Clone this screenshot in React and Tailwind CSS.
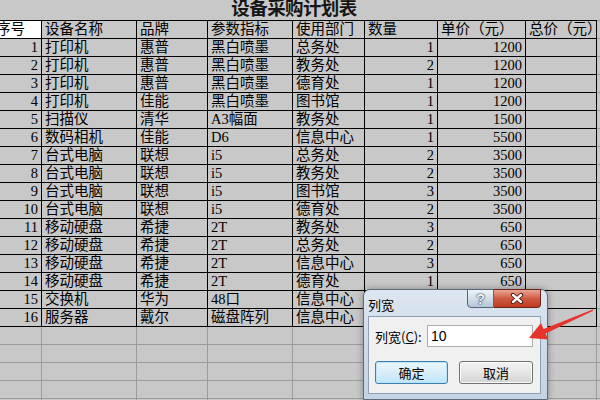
import React from "react";

const W = ["w-[50px]", "w-[95px]", "w-[71px]", "w-[85px]", "w-[72px]", "w-[73px]", "w-[88px]", "w-[71px]", "w-[90px]"];
const RIGHT = [true, false, false, false, false, true, true, true, false];

const header = ["序号", "设备名称", "品牌", "参数指标", "使用部门", "数量", "单价（元）", "总价（元）", ""];

const rows = [
  [1, "打印机", "惠普", "黑白喷墨", "总务处", 1, 1200],
  [2, "打印机", "惠普", "黑白喷墨", "教务处", 2, 1200],
  [3, "打印机", "惠普", "黑白喷墨", "德育处", 1, 1200],
  [4, "打印机", "佳能", "黑白喷墨", "图书馆", 1, 1200],
  [5, "扫描仪", "清华", "A3幅面", "教务处", 1, 1500],
  [6, "数码相机", "佳能", "D6", "信息中心", 1, 5500],
  [7, "台式电脑", "联想", "i5", "总务处", 2, 3500],
  [8, "台式电脑", "联想", "i5", "教务处", 2, 3500],
  [9, "台式电脑", "联想", "i5", "图书馆", 3, 3500],
  [10, "台式电脑", "联想", "i5", "德育处", 2, 3500],
  [11, "移动硬盘", "希捷", "2T", "教务处", 3, 650],
  [12, "移动硬盘", "希捷", "2T", "总务处", 2, 650],
  [13, "移动硬盘", "希捷", "2T", "信息中心", 3, 650],
  [14, "移动硬盘", "希捷", "2T", "德育处", 1, 650],
  [15, "交换机", "华为", "48口", "信息中心", "", ""],
  [16, "服务器", "戴尔", "磁盘阵列", "信息中心", "", ""],
];

function Row({ cells, head }) {
  return (
    <div className="flex">
      {W.map((w, i) => {
        const last = i === W.length - 1;
        const border = last ? "border-[#9c9c9c]" : "border-black";
        return (
          <div
            key={i}
            className={`${w} shrink-0 ${head ? "h-[19px] border-t" : "h-[18px]"} border-b border-r ${border} px-[3px] leading-[17px] whitespace-nowrap overflow-hidden ${RIGHT[i] && !head ? "text-right" : "text-left"} ${head && i === 0 ? "bg-white pl-[4px]" : ""}`}
          >
            {cells[i] ?? ""}
          </div>
        );
      })}
    </div>
  );
}

function EmptyRow() {
  return (
    <div className="flex">
      {W.map((w, i) => (
        <div key={i} className={`${w} shrink-0 h-[18px] border-b border-r border-[#9c9c9c]`} />
      ))}
    </div>
  );
}

export default function App() {
  return (
    <div className="relative w-[600px] h-[400px] overflow-hidden bg-[#c8c8c8] text-black">
      {/* title */}
      <div className="h-[20px] flex justify-center pr-[12px]">
        <div className="leading-[14px] text-[18.5px] font-bold text-[#161616] tracking-[-0.6px] [font-family:'Noto_Sans_CJK_SC',sans-serif]">
          设备采购计划表
        </div>
      </div>

      {/* sheet */}
      <div className="-ml-[8px] text-[14.5px] [font-family:'Liberation_Serif','Noto_Sans_CJK_SC',serif]">
        <Row cells={header} head />
        {rows.map((r, i) => (
          <Row key={i} cells={r} />
        ))}
        <EmptyRow />
        <EmptyRow />
        <EmptyRow />
        <EmptyRow />
        <EmptyRow />
      </div>

      {/* dialog */}
      <div className="absolute left-[363px] top-[289px] w-[185px] h-[111px] rounded-t-[7px] border border-[#5d6b7b] bg-gradient-to-b from-[#dde7f1] via-[#cddaea] to-[#c4d3e4] shadow-[0_0_7px_rgba(0,0,0,0.35)] [font-family:'Noto_Sans_CJK_SC','Liberation_Sans',sans-serif]">
        <div className="absolute right-[6px] -top-[1px] flex">
          <div className="w-[27px] h-[19px] rounded-bl-[4px] border border-[#56667a] bg-gradient-to-b from-[#eef3f8] via-[#d3dee9] to-[#b4c5d8] flex items-center justify-center text-[15px] font-bold text-[#eef2f6] leading-none [font-family:'Liberation_Sans',sans-serif] [text-shadow:0_0_1px_#1e2c3c,0_0_2px_#1e2c3c]">
            ?
          </div>
          <div className="w-[47px] h-[19px] rounded-br-[4px] border border-l-0 border-[#6a241a] bg-gradient-to-b from-[#e8a695] via-[#cf5a44] to-[#c0391f] flex items-center justify-center">
            <svg width="14" height="11" viewBox="0 0 14 11">
              <path d="M3 2 L11 9 M11 2 L3 9" stroke="#4a1208" strokeWidth="4.2" strokeLinecap="round" />
              <path d="M3 2 L11 9 M11 2 L3 9" stroke="#ffffff" strokeWidth="2.4" strokeLinecap="round" />
            </svg>
          </div>
        </div>
        <div className="h-[26px] pl-[4px] pt-[2px] flex items-center text-[13px] leading-none text-black">列宽</div>
        <div className="ml-[4px] w-[173px] h-[78px] border border-[#8fa0b4] bg-[#f0f0f0]">
          <div className="flex items-center mt-[8px] pl-[6px]">
            <div className="w-[52px] text-[13px] leading-none whitespace-nowrap">
              列宽(<span className="underline">C</span>):
            </div>
            <div className="w-[106px] h-[22px] border border-[#abadb3] bg-white flex items-center pl-[3px] text-[14px] [font-family:'Liberation_Sans',sans-serif]">
              10
            </div>
          </div>
          <div className="flex mt-[14px] pl-[6px] gap-[11px]">
            <div className="w-[73px] h-[23px] rounded-[3px] border border-[#3c7fb1] bg-gradient-to-b from-[#eaf6fd] via-[#d9eefa] to-[#bee6fd] shadow-[inset_0_0_0_1px_#b9e4fb] flex items-center justify-center text-[13px] leading-none">
              确定
            </div>
            <div className="w-[74px] h-[23px] rounded-[3px] border border-[#707070] bg-gradient-to-b from-[#f2f2f2] via-[#e6e6e6] to-[#d2d2d2] shadow-[inset_0_0_0_1px_#fbfbfb] flex items-center justify-center text-[13px] leading-none">
              取消
            </div>
          </div>
        </div>
      </div>

      {/* red arrow annotation */}
      <svg className="absolute left-0 top-0 pointer-events-none" width="600" height="400" viewBox="0 0 600 400">
        <polygon
          points="529,338 541,323 543.6,328.9 592.7,309.4 593.3,310.8 545.6,333.5 548.2,339.6"
          fill="#e5352b"
        />
      </svg>
    </div>
  );
}
